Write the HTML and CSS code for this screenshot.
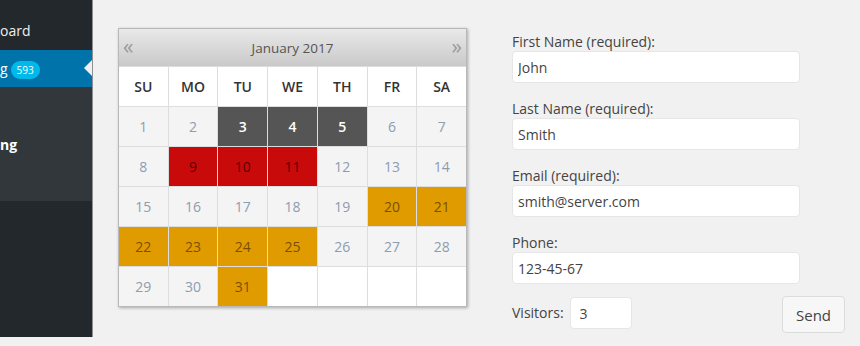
FILE: index.html
```html
<!DOCTYPE HTML>
<html>
  <head>
    <title>Booking</title>
    <link rel="stylesheet" href="styles.css">
  </head>
  <body>
    <div class="sidebar">
      <div class="menu-item">oard</div>
      <div class="menu-item active">g <span class="badge">593</span></div>
      <div class="submenu">
        <div class="sub-item">ng</div>
      </div>
    </div>

    <div class="main">
      <div class="calendar">
        <div class="cal-head">
          <span class="nav">&laquo;</span>
          <span class="month">January 2017</span>
          <span class="nav">&raquo;</span>
        </div>
        <div class="cal-grid">
          <div class="dname">SU</div>
          <div class="dname">MO</div>
          <div class="dname">TU</div>
          <div class="dname">WE</div>
          <div class="dname">TH</div>
          <div class="dname">FR</div>
          <div class="dname">SA</div>

          <div class="day">1</div>
          <div class="day">2</div>
          <div class="day booked">3</div>
          <div class="day booked">4</div>
          <div class="day booked">5</div>
          <div class="day">6</div>
          <div class="day">7</div>

          <div class="day">8</div>
          <div class="day taken">9</div>
          <div class="day taken">10</div>
          <div class="day taken">11</div>
          <div class="day">12</div>
          <div class="day">13</div>
          <div class="day">14</div>

          <div class="day">15</div>
          <div class="day">16</div>
          <div class="day">17</div>
          <div class="day">18</div>
          <div class="day">19</div>
          <div class="day pending">20</div>
          <div class="day pending">21</div>

          <div class="day pending">22</div>
          <div class="day pending">23</div>
          <div class="day pending">24</div>
          <div class="day pending">25</div>
          <div class="day">26</div>
          <div class="day">27</div>
          <div class="day">28</div>

          <div class="day">29</div>
          <div class="day">30</div>
          <div class="day pending">31</div>
          <div class="day empty"></div>
          <div class="day empty"></div>
          <div class="day empty"></div>
          <div class="day empty"></div>
        </div>
      </div>

      <form class="booking-form">
        <div class="field">
          <label for="fname">First Name (required):</label>
          <input id="fname" type="text" value="John">
        </div>
        <div class="field">
          <label for="lname">Last Name (required):</label>
          <input id="lname" type="text" value="Smith">
        </div>
        <div class="field">
          <label for="email">Email (required):</label>
          <input id="email" type="text" value="smith@server.com">
        </div>
        <div class="field">
          <label for="phone">Phone:</label>
          <input id="phone" type="text" value="123-45-67">
        </div>
        <div class="last-row">
          <div class="visitors">
            <label for="visitors">Visitors:</label>
            <input id="visitors" type="text" value="3">
          </div>
          <button type="button" class="send">Send</button>
        </div>
      </form>
    </div>
  </body>
</html>
```

FILE: styles.css
```css
*{
  box-sizing:border-box;
}

body{
  margin:0;
  background-color:#f1f1f1;
  font-family:"Open Sans", "Noto Sans", sans-serif;
  display:flex;
  align-items:flex-start;
}

/* ---------- admin sidebar ---------- */

.sidebar{
  width:93px;
  height:337px;
  background-color:#23282d;
  border-right:1px solid #8c8f94;
  display:flex;
  flex-direction:column;
  flex-shrink:0;
}

.menu-item{
  color:#eee;
  font-size:14px;
  line-height:18px;
  height:50px;
  padding-top:22px;
}

.menu-item.active{
  position:relative;
  height:37px;
  padding-top:0;
  background-color:#0073aa;
  color:#fff;
  display:flex;
  align-items:center;
  gap:3px;
  font-size:14px;
}

.menu-item.active::after{
  content:"";
  position:absolute;
  right:0;
  top:10px;
  border:8px solid transparent;
  border-right-color:#f1f1f1;
}

.badge{
  background-color:#00b9eb;
  color:#fff;
  font-size:10px;
  line-height:18px;
  padding:0 6px;
  border-radius:9px;
  margin-top:3px;
}

.submenu{
  background-color:#32373c;
  height:114px;
  padding-top:49px;
}

.sub-item{
  color:#fff;
  font-weight:700;
  font-size:14px;
  line-height:18px;
}

/* ---------- main area ---------- */

.main{
  display:flex;
  align-items:flex-start;
  padding:28px 0 0 25px;
  gap:45px;
}

.calendar{
  width:349px;
  border:1px solid #b9b9b9;
  box-shadow:1px 1px 3px rgba(0,0,0,0.3);
  background-color:#ddd;
}

.cal-head{
  height:37px;
  display:flex;
  justify-content:space-between;
  align-items:center;
  padding:0 4px 0 4px;
  background:linear-gradient(#e9e9e9, #c9c9c9);
  color:#555;
}

.month{
  font-size:13.5px;
}

.nav{
  font-size:21px;
  color:#9a9a9a;
  line-height:20px;
  margin-top:-4px;
}

.cal-grid{
  display:grid;
  grid-template-columns:repeat(7, 1fr);
  grid-auto-rows:39px;
  gap:1px;
  padding-top:1px;
}

.dname, .day{
  display:flex;
  justify-content:center;
  align-items:center;
  font-size:14px;
}

.dname{
  background-color:#fff;
  color:#333;
  font-weight:600;
}

.day{
  background-color:#f4f4f4;
  color:#8d9cb0;
}

.day.booked{
  background-color:#555;
  color:#fff;
  font-weight:600;
}

.day.taken{
  background-color:#c80a0a;
  color:#5a0000;
}

.day.pending{
  background-color:#e09b00;
  color:#7a5000;
}

.day.empty{
  background-color:#fff;
}

/* ---------- booking form ---------- */

.booking-form{
  width:333px;
  margin-top:5px;
}

.field{
  margin-bottom:17px;
}

label{
  display:block;
  color:#444;
  font-size:14px;
  line-height:18px;
}

input{
  display:block;
  width:288px;
  height:32px;
  border:1px solid #e6e6e6;
  border-radius:4px;
  background-color:#fff;
  padding:0 5px;
  font-family:inherit;
  font-size:14px;
  color:#444;
}

.last-row{
  display:flex;
  justify-content:space-between;
  align-items:flex-start;
  margin-top:-5px;
}

.visitors{
  display:flex;
  align-items:center;
  gap:6px;
  margin-top:1px;
}

.visitors input{
  width:62px;
  padding-left:9px;
}

.send{
  width:63px;
  height:37px;
  background-color:#f7f7f7;
  border:1px solid #dcdcdc;
  border-radius:4px;
  font-family:inherit;
  font-size:15px;
  color:#444;
}
```
